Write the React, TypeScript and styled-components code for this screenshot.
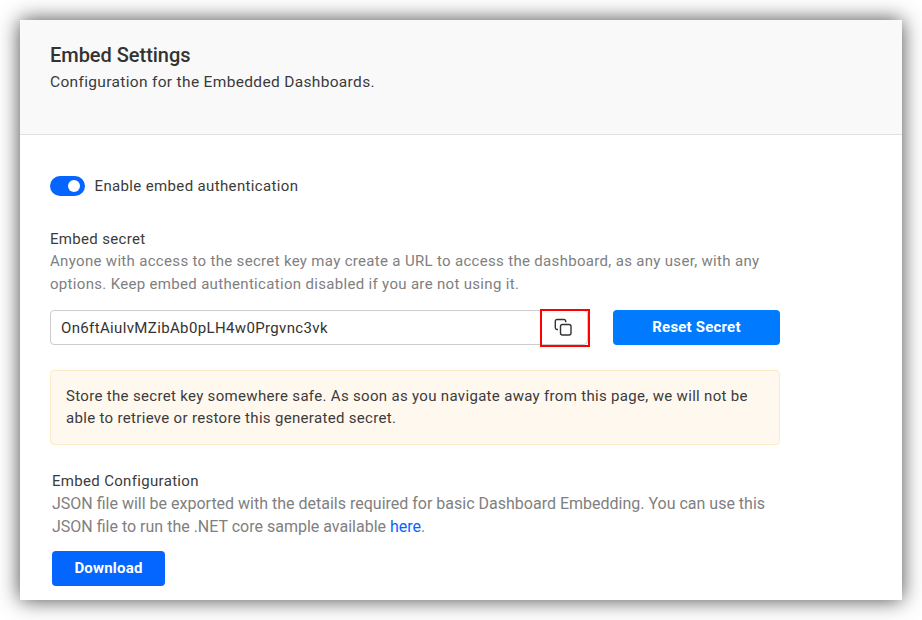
import React from "react";
import styled, { createGlobalStyle } from "styled-components";

const Global = createGlobalStyle`
  * { box-sizing: border-box; }
  body { margin: 0; background: #fff; font-family: Roboto, sans-serif; font-size: 15px; letter-spacing: 0.32px; color: #3b3b3b; overflow: hidden; }
  p, h1, h2 { margin: 0; font-weight: 400; }
`;
const Page = styled.main`height: 620px; padding: 20px;`;
const Panel = styled.section`height: 580px; background: #fff; box-shadow: 0 0 20px rgba(0,0,0,.72);`;
const Header = styled.header`height: 115px; padding: 22px 30px; background: #f9f9f9; border-bottom: 1px solid #e1e1e1;`;
const Title = styled.h1`font-size: 20px; line-height: 26px; font-weight: 500; letter-spacing: -.03px; color: #333;`;
const Subtitle = styled.p`font-size: 15.5px; letter-spacing: .33px; line-height: 28px;`;
const Content = styled.div`padding: 41px 30px 0;`;
const ToggleRow = styled.label`display: flex; align-items: center; height: 20px; gap: 9.5px; letter-spacing: .36px;`;
const Switch = styled.span`display: flex; justify-content: flex-end; align-items: center; width: 35px; height: 20px; padding-right: 5px; border-radius: 10px; background: #0565ff;`;
const Knob = styled.span`width: 12px; height: 12px; border-radius: 50%; background: #fff;`;
const SecretSection = styled.section`padding-top: 32px; width: 730px;`;
const Label = styled.h2`font-size: 15px; line-height: 22px;`;
const Help = styled.p<{ $large?: boolean }>`font-size: ${p => p.$large ? 16 : 15}px; letter-spacing: ${p => p.$large ? "0" : ".32px"}; line-height: 23px; color: #808080; white-space: nowrap;`;
const SecretRow = styled.div`display: flex; justify-content: space-between; height: 35px; margin-top: 14px;`;
const SecretGroup = styled.div`position: relative; display: flex; width: 538px; height: 35px; border: 1px solid #ccc; border-radius: 4px;`;
const SecretInput = styled.input`flex: 1; min-width: 0; padding: 0 10px; border: 0; background: transparent; font: inherit; letter-spacing: .36px; color: #333; outline: none;`;
const CopyButton = styled.button`display: grid; place-items: center; width: 47px; padding: 0 1px 2px 0; border: 0; background: transparent; color: #333;`;
const Highlight = styled.span`position: absolute; top: -2px; right: -3px; width: 50px; height: 38px; border: 2px solid #f00; pointer-events: none;`;
const Button = styled.button<{ $width: number; $color: string }>`width: ${p => p.$width}px; height: 35px; padding: 0 0 2px; border: 0; border-radius: 4px; background: ${p => p.$color}; color: #fff; font: 700 15px Roboto, sans-serif; letter-spacing: .2px;`;
const Notice = styled.div`height: 75px; margin-top: 25px; padding: 14px 15px; border: 1px solid #ffe9c7; border-radius: 4px; background: #fff8ef; line-height: 22px; white-space: nowrap;`;
const ConfigSection = styled.section`padding: 25px 0 0 2px;`;
const Here = styled.a`color: #0565ff;`;
const DownloadSlot = styled.div`margin-top: 13px;`;

export default function App() {
  return <><Global /><Page><Panel>
    <Header><Title>Embed Settings</Title><Subtitle>Configuration for the Embedded Dashboards.</Subtitle></Header>
    <Content>
      <ToggleRow><Switch><Knob /></Switch>Enable embed authentication</ToggleRow>
      <SecretSection>
        <Label>Embed secret</Label>
        <Help>Anyone with access to the secret key may create a URL to access the dashboard, as any user, with any<br />options. Keep embed authentication disabled if you are not using it.</Help>
        <SecretRow>
          <SecretGroup>
            <SecretInput readOnly value="On6ftAiulvMZibAb0pLH4w0Prgvnc3vk" />
            <CopyButton aria-label="Copy secret"><svg width="18" height="18" viewBox="0 0 18 18" fill="none" stroke="currentColor" strokeWidth="1.4"><rect x="6.5" y="6.5" width="10.5" height="10.5" rx="2" /><path d="M4 11.5H3a1.7 1.7 0 0 1-1.7-1.7V3.2A1.7 1.7 0 0 1 3 1.5h7A1.7 1.7 0 0 1 11.7 3.2v1" /></svg></CopyButton>
            <Highlight />
          </SecretGroup>
          <Button $width={167} $color="#007bff">Reset Secret</Button>
        </SecretRow>
        <Notice>Store the secret key somewhere safe. As soon as you navigate away from this page, we will not be<br />able to retrieve or restore this generated secret.</Notice>
      </SecretSection>
      <ConfigSection>
        <Label>Embed Configuration</Label>
        <Help $large>JSON file will be exported with the details required for basic Dashboard Embedding. You can use this<br />JSON file to run the .NET core sample available <Here>here</Here>.</Help>
        <DownloadSlot><Button $width={113} $color="#0565ff">Download</Button></DownloadSlot>
      </ConfigSection>
    </Content>
  </Panel></Page></>;
}
